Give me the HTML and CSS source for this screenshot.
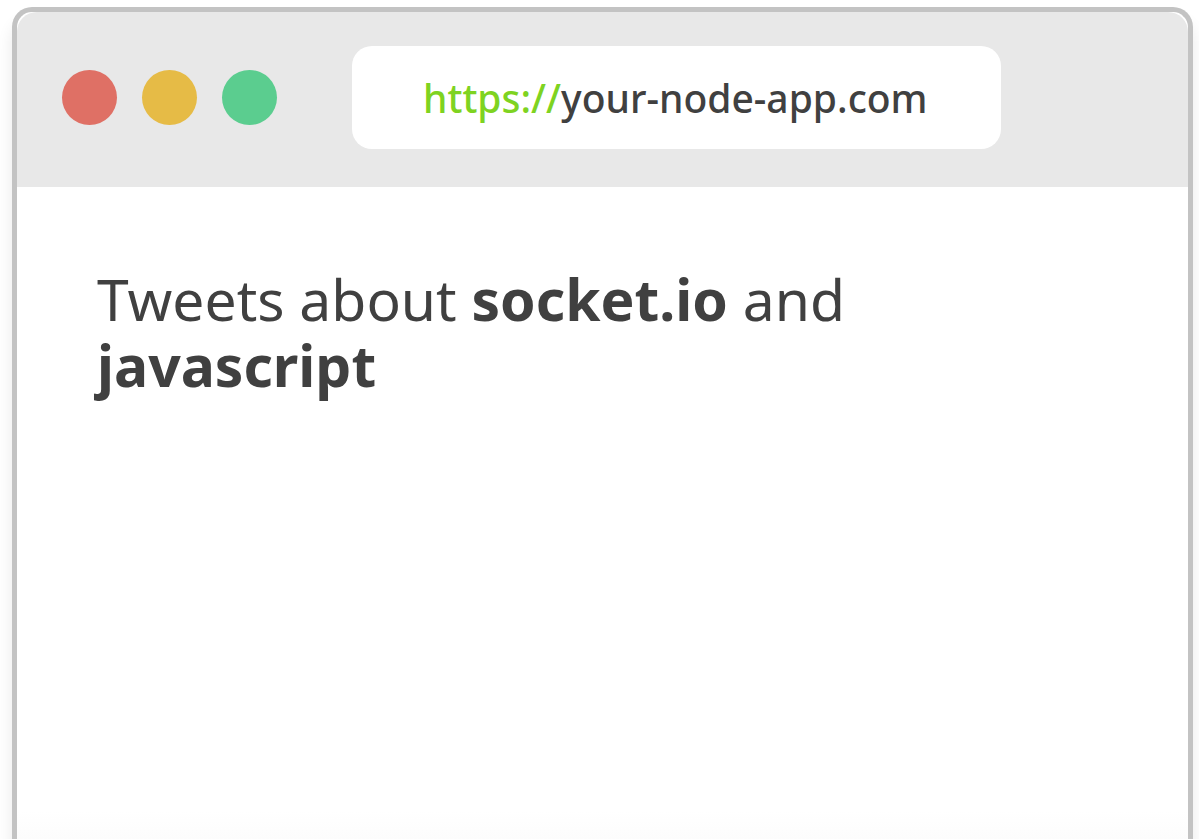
FILE: index.html
```html
<!DOCTYPE html>
<html lang="en">
<head>
<meta charset="utf-8">
<meta name="viewport" content="width=device-width, initial-scale=1">
<title>your-node-app.com</title>
<link rel="stylesheet" href="styles.css">
</head>
<body>
<div class="window">
  <header class="toolbar">
    <div class="controls">
      <span class="dot dot-red"></span>
      <span class="dot dot-yellow"></span>
      <span class="dot dot-green"></span>
    </div>
    <div class="address"><span class="scheme">https://</span>your-node-app.com</div>
  </header>
  <main class="content">
    <h1 class="title">Tweets about <strong>socket.io</strong> and <strong>javascript</strong></h1>
  </main>
</div>
</body>
</html>
```

FILE: styles.css
```css
* {
  box-sizing: border-box;
}

body {
  display: flow-root;
  margin: 0;
  background: #fff;
  color: #404040;
}

.window {
  margin: 7px 6px 0 12px;
  min-height: calc(100vh - 7px);
  border: 5px solid #c3c3c3;
  border-bottom: 0;
  border-radius: 20px 20px 0 0;
  background: linear-gradient(to top, #fcfcfc, #fff 28px);
  box-shadow: 0 14px 16px rgba(0, 0, 0, 0.09);
}

.toolbar {
  display: flex;
  align-items: center;
  gap: 75px;
  padding: 34px 45px 38px;
  border-radius: 20px 20px 0 0;
  background: #e8e8e8;
}

.controls {
  display: flex;
  gap: 25px;
}

.dot {
  width: 55px;
  height: 55px;
  border-radius: 50%;
}

.dot-red {
  background: #df7065;
}

.dot-yellow {
  background: #e6bb46;
}

.dot-green {
  background: #5bcd8f;
}

.address {
  flex: 0 1 649px;
  padding: 24px 71px 23px;
  border-radius: 20px;
  background: #fff;
  font: 500 39px/56px "Noto Sans", "Open Sans", sans-serif;
  white-space: nowrap;
}

.scheme {
  color: #7ed321;
}

.content {
  padding: 79px 80px;
}

.title {
  max-width: 800px;
  margin: 0;
  font: 400 57px/66px "Noto Sans", "Open Sans", sans-serif;
}
```
